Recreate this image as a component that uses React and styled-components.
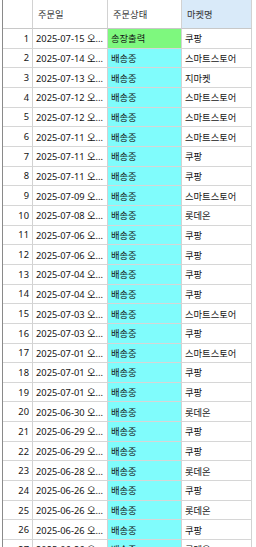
import React from "react";
import styled, { createGlobalStyle } from "styled-components";

const Global = createGlobalStyle`
  html, body { margin: 0; padding: 0; background: #ffffff; overflow: hidden; }
  body { font-family: "Noto Sans", "Noto Sans CJK KR", sans-serif; }
`;

const Grid = styled.div`
  margin-left: 2px;
  width: 250px;
  height: 547px;
  overflow: hidden;
  border-left: 1px solid #8a8a8a;
  display: grid;
  grid-template-columns: 30px 75px 74px 70px;
  grid-auto-rows: 19.66px;
  grid-template-rows: 29px;
  font-size: 9.3px;
  color: #141414;
`;

const HeaderCell = styled.div`
  box-sizing: border-box;
  display: flex;
  align-items: center;
  padding-left: ${(p) => (p.$corner ? 0 : 5)}px;
  background: ${(p) => (p.$active ? "#d9eaf9" : "#ffffff")};
  border-right: 1px solid #d2d2d2;
  border-bottom: 1px solid #c8c8c8;
  color: #333333;
  white-space: nowrap;
  overflow: hidden;
`;

const RowNum = styled.div`
  box-sizing: border-box;
  display: flex;
  align-items: center;
  justify-content: flex-end;
  padding-right: 3px;
  border-right: 1px solid #d2d2d2;
  border-bottom: 1px solid #d6d6d6;
  background: #ffffff;
`;

const Cell = styled.div`
  box-sizing: border-box;
  display: flex;
  align-items: center;
  padding-left: 3px;
  border-right: 1px solid #d2d2d2;
  border-bottom: 1px solid #d6d6d6;
  background: ${(p) => p.$bg || "#ffffff"};
  white-space: nowrap;
  overflow: hidden;
`;

const STATUS_BG = {
  송장출력: "#7ef87e",
  배송중: "#80fcfc",
};

const rows = [
  ["2025-07-15", "송장출력", "쿠팡"],
  ["2025-07-14", "배송중", "스마트스토어"],
  ["2025-07-13", "배송중", "지마켓"],
  ["2025-07-12", "배송중", "스마트스토어"],
  ["2025-07-12", "배송중", "스마트스토어"],
  ["2025-07-11", "배송중", "스마트스토어"],
  ["2025-07-11", "배송중", "쿠팡"],
  ["2025-07-11", "배송중", "쿠팡"],
  ["2025-07-09", "배송중", "스마트스토어"],
  ["2025-07-08", "배송중", "롯데온"],
  ["2025-07-06", "배송중", "쿠팡"],
  ["2025-07-06", "배송중", "쿠팡"],
  ["2025-07-04", "배송중", "쿠팡"],
  ["2025-07-04", "배송중", "쿠팡"],
  ["2025-07-03", "배송중", "스마트스토어"],
  ["2025-07-03", "배송중", "쿠팡"],
  ["2025-07-01", "배송중", "스마트스토어"],
  ["2025-07-01", "배송중", "쿠팡"],
  ["2025-07-01", "배송중", "쿠팡"],
  ["2025-06-30", "배송중", "롯데온"],
  ["2025-06-29", "배송중", "쿠팡"],
  ["2025-06-29", "배송중", "쿠팡"],
  ["2025-06-28", "배송중", "롯데온"],
  ["2025-06-26", "배송중", "쿠팡"],
  ["2025-06-26", "배송중", "롯데온"],
  ["2025-06-26", "배송중", "쿠팡"],
  ["2025-06-26", "배송중", "롯데온"],
];

export default function App() {
  return (
    <>
      <Global />
      <Grid>
        <HeaderCell $corner />
        <HeaderCell>주문일</HeaderCell>
        <HeaderCell>주문상태</HeaderCell>
        <HeaderCell $active>마켓명</HeaderCell>
        {rows.map(([date, status, market], i) => (
          <React.Fragment key={i}>
            <RowNum>{i + 1}</RowNum>
            <Cell>{date} 오...</Cell>
            <Cell $bg={STATUS_BG[status]}>{status}</Cell>
            <Cell>{market}</Cell>
          </React.Fragment>
        ))}
      </Grid>
    </>
  );
}
